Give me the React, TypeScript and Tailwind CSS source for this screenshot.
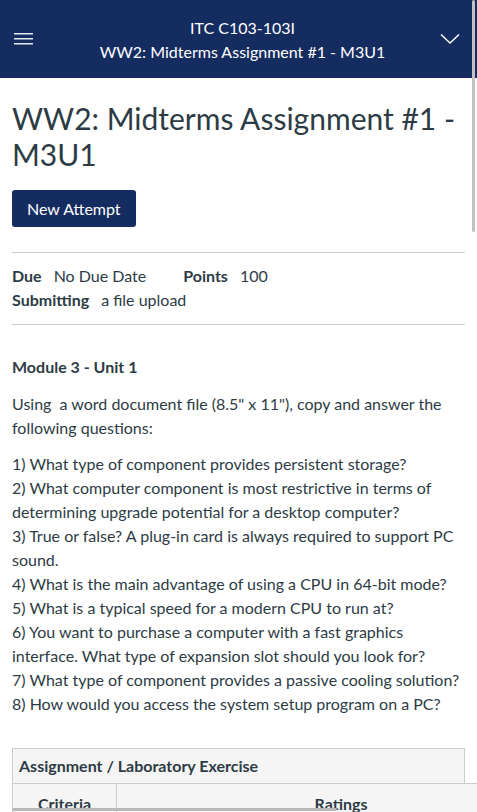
import React from "react";

const questions = [
  "1) What type of component provides persistent storage?",
  "2) What computer component is most restrictive in terms of determining upgrade potential for a desktop computer?",
  "3) True or false? A plug-in card is always required to support PC sound.",
  "4) What is the main advantage of using a CPU in 64-bit mode?",
  "5) What is a typical speed for a modern CPU to run at?",
  "6) You want to purchase a computer with a fast graphics interface. What type of expansion slot should you look for?",
  "7) What type of component provides a passive cooling solution?",
  "8) How would you access the system setup program on a PC?",
];

export default function App() {
  return (
    <div
      className="relative w-[477px] h-[812px] overflow-hidden bg-white text-[#2d3b45]"
      style={{ fontFamily: "Lato, 'Noto Sans', sans-serif" }}
    >
      <header className="h-[78px] bg-[#152c61] text-white flex items-center">
        <div className="w-[48px] flex justify-center">
          <svg width="20" height="14" viewBox="0 0 20 14">
            <rect x="0" y="1" width="19" height="1.5" fill="#e6e9f0" />
            <rect x="0" y="6" width="19" height="1.5" fill="#e6e9f0" />
            <rect x="0" y="11" width="19" height="1.5" fill="#e6e9f0" />
          </svg>
        </div>
        <div className="flex-1 flex flex-col items-center text-[16px] leading-[24px] pt-[2px] pl-[8px]">
          <div>ITC C103-103I</div>
          <div>WW2: Midterms Assignment #1 - M3U1</div>
        </div>
        <div className="w-[48px] flex justify-center pr-[6px]">
          <svg width="20" height="12" viewBox="0 0 20 12">
            <path d="M1 1.5 L10 10 L19 1.5" fill="none" stroke="#fff" strokeWidth="1.5" />
          </svg>
        </div>
      </header>

      <main className="px-3">
        <h1 className="text-[30px] leading-[36px] mt-[22px] font-normal">
          WW2: Midterms Assignment #1 - M3U1
        </h1>
        <button className="mt-[18px] h-[37px] px-[15px] bg-[#152c61] text-white rounded-[3px] text-[16px]">
          New Attempt
        </button>

        <div className="mt-[25px] border-t border-[#c7cdd1] w-[453px]" />
        <div className="pt-[11px] pb-[12px] text-[16px] leading-[24px]">
          <div className="flex">
            <span className="font-bold">Due</span>
            <span className="ml-[12px]">No Due Date</span>
            <span className="font-bold ml-[37px]">Points</span>
            <span className="ml-[12px]">100</span>
          </div>
          <div className="flex">
            <span className="font-bold">Submitting</span>
            <span className="ml-[12px]">a file upload</span>
          </div>
        </div>
        <div className="border-t border-[#c7cdd1] w-[453px]" />

        <div className="mt-[30px] text-[16px] font-bold leading-[24px]">Module 3 - Unit 1</div>
        <p className="mt-[13px] text-[16px] leading-[24px] pr-[14px]">
          Using&nbsp; a word document file (8.5" x 11"), copy and answer the following questions:
        </p>
        <div className="mt-[12px] text-[16px] leading-[24px]">
          {questions.map((q) => (
            <div key={q}>{q}</div>
          ))}
        </div>

        <div className="mt-[32px] w-[600px]">
          <div className="w-[453px] h-[36px] border border-[#c7cdd1] bg-[#f5f5f5] flex items-center px-[6px] text-[16px] font-bold">
            Assignment / Laboratory Exercise
          </div>
          <div className="flex h-[40px] border-l border-t border-[#c7cdd1] -mt-px bg-[#f5f5f5] text-[16px] font-bold">
            <div className="w-[104px] border-r border-[#c7cdd1] flex justify-center pt-[8px]">Criteria</div>
            <div className="w-[448px] flex justify-center pt-[8px]">Ratings</div>
          </div>
        </div>
      </main>

      <div className="absolute left-[472px] top-0 w-[3px] h-[232px] bg-[#c2c2c2] rounded-full" />
      <div className="absolute left-[12px] top-[808px] w-[325px] h-[3px] bg-[#b9b9b9] rounded-full" />
    </div>
  );
}
